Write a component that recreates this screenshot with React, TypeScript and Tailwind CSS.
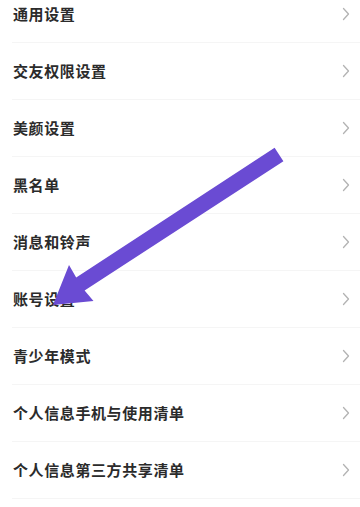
import React from 'react';

const items = [
  '通用设置',
  '交友权限设置',
  '美颜设置',
  '黑名单',
  '消息和铃声',
  '账号设置',
  '青少年模式',
  '个人信息手机与使用清单',
  '个人信息第三方共享清单',
];

const Chevron: React.FC = () => (
  <svg width="8" height="14" viewBox="0 0 8 14" fill="none">
    <path d="M1.5 1.5 L6.5 7 L1.5 12.5" stroke="#b3b3b3" strokeWidth="1.3" strokeLinecap="round" strokeLinejoin="round" />
  </svg>
);

export default function App() {
  return (
    <div
      className="relative w-[360px] h-[507px] overflow-hidden bg-white"
      style={{ fontFamily: '"Noto Sans CJK SC", "Noto Sans", sans-serif' }}
    >
      <div className="-mt-[14px]">
        {items.map((label) => (
          <div key={label} className="ml-[12px] h-[57px] flex items-center justify-between border-b border-[#f5f5f5] pl-[1px] pr-[10px]">
            <span className="text-[15px] font-semibold tracking-[0.6px] text-[#2b2b2b]">{label}</span>
            <Chevron />
          </div>
        ))}
      </div>

      {/* annotation arrow */}
      <svg className="absolute inset-0 pointer-events-none" width="360" height="507" viewBox="0 0 360 507">
        <polygon
          points="274.6,147.8 76.2,277.6 69,265 53,305 93.5,301 84.6,290.5 283.4,161.2"
          fill="#6a4bd3"
        />
      </svg>
    </div>
  );
}
